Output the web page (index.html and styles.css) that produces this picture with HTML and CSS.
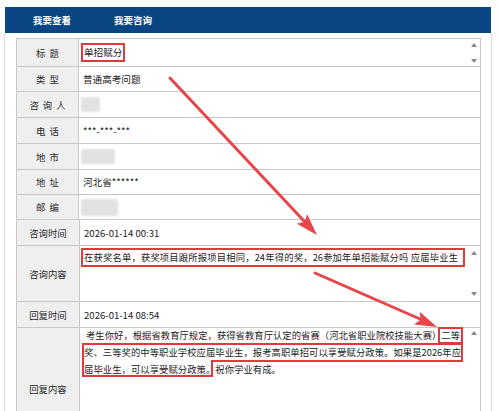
FILE: index.html
```html
<!DOCTYPE html>
<html lang="zh-CN">
<head>
<meta charset="utf-8">
<title>我要咨询</title>
<link rel="stylesheet" href="styles.css">
</head>
<body>
<div class="page">
  <div class="tabs">
    <span class="tab">我要查看</span>
    <span class="tab">我要咨询</span>
  </div>
  <div class="body">
    <div class="form">
      <div class="row h28">
        <div class="lbl sp">标题</div>
        <div class="val area tight">
          <div class="txt mid"><span class="mark">单招赋分</span></div>
          <div class="sb sb-title"><i class="up"></i><i class="down"></i></div>
        </div>
      </div>
      <div class="row h25">
        <div class="lbl sp">类型</div>
        <div class="val">普通高考问题</div>
      </div>
      <div class="row h26">
        <div class="lbl sp">咨询人</div>
        <div class="val tight"><span class="blur w19"></span></div>
      </div>
      <div class="row h26">
        <div class="lbl sp">电话</div>
        <div class="val">***-***-***</div>
      </div>
      <div class="row h26">
        <div class="lbl sp">地市</div>
        <div class="val tight"><span class="blur w34"></span></div>
      </div>
      <div class="row h25">
        <div class="lbl sp">地址</div>
        <div class="val">河北省******</div>
      </div>
      <div class="row h25">
        <div class="lbl sp">邮编</div>
        <div class="val tight"><span class="blur w37"></span></div>
      </div>
      <div class="row h26">
        <div class="lbl">咨询时间</div>
        <div class="val">2026-01-14 00:31</div>
      </div>
      <div class="row h56">
        <div class="lbl">咨询内容</div>
        <div class="val area top tightest">
          <div class="txt"><span class="mark wide"><span class="jl w374">在获奖名单，获奖项目跟所报项目相同，24年得的奖，26参加年单招能赋分吗 应届毕业生</span></span></div>
          <div class="sb sb-content"><i class="up"></i><i class="down"></i></div>
        </div>
      </div>
      <div class="row h26">
        <div class="lbl">回复时间</div>
        <div class="val">2026-01-14 08:54</div>
      </div>
      <div class="row h123">
        <div class="lbl">回复内容</div>
        <div class="val area top">
          <div class="txt reply">
            <span class="jl w374 ind">考生你好，根据省教育厅规定，获得省教育厅认定的省赛（河北省职业院校技能大赛）二等</span>
            <span class="jl w377">奖、三等奖的中等职业学校应届毕业生，报考高职单招可以享受赋分政策。如果是2026年应</span>
            <span class="ln">届毕业生，可以享受赋分政策。祝你学业有成。</span>
          </div>
          <div class="sb sb-reply"><i class="up"></i></div>
        </div>
      </div>
    </div>
  </div>
</div>
<svg class="notes" width="500" height="411" viewBox="0 0 500 411" xmlns="http://www.w3.org/2000/svg">
  <g fill="none" stroke="#e3393b" stroke-width="2">
    <path d="M83 344 H462 V361 H212 V376 H83 Z"/>
    <rect x="439" y="328" width="23" height="15"/>
  </g>
  <g stroke="#e8454a" stroke-width="3" stroke-linecap="round">
    <line x1="170" y1="78" x2="304" y2="221"/>
    <line x1="315" y1="273" x2="420" y2="319"/>
  </g>
  <g fill="#e8454a">
    <polygon points="317,235 296.9,223.7 304.7,221.8 307.1,214.1"/>
    <polygon points="437,327 414,324.5 420.6,319.7 419.7,311.7"/>
  </g>
</svg>
</body>
</html>
```
FILE: styles.css
```css
html, body {
  margin: 0;
  padding: 0;
  background: #ffffff;
}

body {
  position: relative;
  width: 500px;
  height: 411px;
  overflow: hidden;
  font-family: "Noto Sans CJK SC", "Microsoft YaHei", "Noto Sans", sans-serif;
  font-size: 9.6px;
  color: #222222;
}

.page {
  margin-left: 4px;
  width: 488px;
  padding-top: 7px;
}

.tabs {
  margin: 0 1px;
  height: 26px;
  background: #0b4684;
  display: flex;
  align-items: center;
  gap: 43px;
  padding-left: 28px;
}

.tab {
  color: #ffffff;
  font-weight: bold;
  font-size: 9.5px;
  line-height: 26px;
}

.body {
  border-left: 1px solid #dddddd;
  border-right: 1px solid #dddddd;
  padding: 5px 10px 0 11px;
  height: 400px;
}

.form {
  border: 1px solid #c8c8c8;
  border-bottom: none;
}

.row {
  display: flex;
  box-sizing: border-box;
  border-bottom: 1px solid #c8c8c8;
}

.h25 { height: 25px; }
.h26 { height: 26px; }
.h28 { height: 28px; }
.h56 { height: 56px; }
.h123 { height: 123px; }

.lbl {
  width: 62px;
  flex: none;
  background: #efefef;
  border-right: 1px solid #c8c8c8;
  display: flex;
  align-items: center;
  justify-content: center;
  font-size: 9.4px;
  color: #2a2a2a;
}

.lbl.sp {
  letter-spacing: 4px;
  padding-left: 4px;
  box-sizing: border-box;
}

.val {
  flex: 1;
  display: flex;
  align-items: center;
  padding-left: 4px;
  color: #222222;
  white-space: nowrap;
}

.val.tight { padding-left: 2px; }
.val.tightest { padding-left: 1px; }

.val.area {
  align-items: stretch;
}

.txt {
  flex: 1;
}

.txt.mid {
  display: flex;
  align-items: center;
}

.val.top .txt {
  padding-top: 2px;
}

.mark {
  display: inline-block;
  border: 2px solid #e3393b;
  line-height: 15px;
  padding: 0 1px;
}

.mark.wide {
  padding: 0 5px 0 1px;
}

.jl {
  display: block;
  text-align: justify;
  text-align-last: justify;
  font-size: 9.3px;
}

.w374 { width: 374px; }
.w377 { width: 377px; }

.val.top .txt.reply {
  padding-top: 0;
  margin-top: -1px;
  line-height: 17px;
  font-size: 9.4px;
  display: flex;
  flex-direction: column;
  align-items: flex-start;
}

.ind {
  margin-left: 2px;
}

.ln {
  display: block;
}

.sb {
  width: 12px;
  flex: none;
  display: flex;
  flex-direction: column;
  align-items: center;
  justify-content: space-between;
  box-sizing: border-box;
}

.sb-title { padding: 4px 0 3px; }
.sb-content { padding: 5px 0 5px; }
.sb-reply { padding-top: 3px; }

.up, .down {
  display: block;
  width: 0;
  height: 0;
  border-left: 3px solid transparent;
  border-right: 3px solid transparent;
}

.up { border-bottom: 4px solid #8a8a8a; }
.down { border-top: 4px solid #8a8a8a; }

.blur {
  display: inline-block;
  height: 15px;
  background: #e2e2e2;
  border-radius: 2px;
  filter: blur(0.8px);
}

.w19 { width: 19px; }
.w34 { width: 34px; }
.w37 { width: 37px; height: 17px; }

.notes {
  position: absolute;
  left: 0;
  top: 0;
  pointer-events: none;
}
```
